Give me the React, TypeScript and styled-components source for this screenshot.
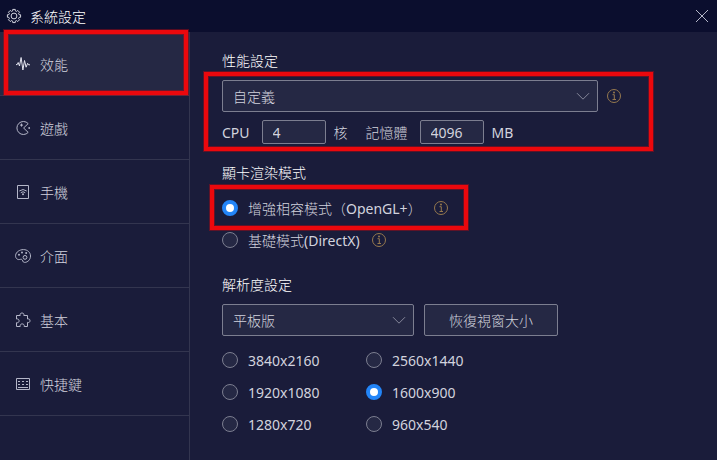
import React, { useState } from "react";
import styled, { createGlobalStyle, css } from "styled-components";

const color = {
  bar: "#0b0e2e",
  page: "#1a1c3a",
  raised: "#252844",
  line: "#33354f",
  border: "#7c7e90",
  text: "#d2d3de",
  heading: "#ffffff",
  muted: "#b4b6c8",
  accent: "#2385f8",
  info: "#96794f",
  mark: "#eb080d",
};

const GlobalStyle = createGlobalStyle`
  *, *::before, *::after { box-sizing: border-box; }
  body {
    margin: 0;
    background: ${color.page};
    color: ${color.text};
    font: 14px/20px "Noto Sans", "Noto Sans CJK TC Light", "Noto Sans CJK TC", sans-serif;
  }
  button, input, select { font: inherit; color: inherit; margin: 0; }
`;

const Window = styled.div`
  display: flex;
  flex-direction: column;
  min-height: 100vh;
`;

const TitleBar = styled.header`
  display: flex;
  align-items: center;
  gap: 8px;
  height: 32px;
  padding: 0 8px 0 6px;
  background: ${color.bar};
  color: ${color.heading};
`;

const Title = styled.h1`
  flex: 1;
  margin: 0;
  padding-top: 2px;
  font-size: 14px;
  font-weight: 400;
`;

const IconButton = styled.button`
  display: flex;
  padding: 0;
  border: 0;
  background: none;
  color: ${color.muted};
  cursor: pointer;
`;

const Body = styled.div`
  display: flex;
  flex: 1;
`;

const Sidebar = styled.nav`
  flex: 0 0 190px;
  border-right: 1px solid ${color.line};
`;

const marked = css`
  position: relative;
  &::after {
    content: "";
    position: absolute;
    border: 4px solid ${color.mark};
    box-shadow: 0 0 0 1px rgba(200, 8, 16, 0.4), inset 0 0 0 1px rgba(200, 8, 16, 0.4);
    pointer-events: none;
  }
`;

const NavItem = styled.button<{ $active: boolean; $marked?: boolean }>`
  display: flex;
  align-items: center;
  gap: 9px;
  width: 100%;
  height: 64px;
  padding: 0 15px;
  border: 0;
  border-bottom: 1px solid ${color.line};
  background: ${(p) => (p.$active ? color.raised : "transparent")};
  text-align: left;
  cursor: pointer;
  svg { color: ${(p) => (p.$active ? "#e4e5f0" : color.muted)}; }
  ${(p) => p.$marked && marked}
  &::after { inset: -2px 1px 0 4px; }
`;

const ItemText = styled.span`
  padding-top: 2px;
`;

const Content = styled.main`
  display: flex;
  flex: 1;
  flex-direction: column;
  gap: 20px;
  min-width: 0;
  padding: 20px 32px;
`;

const Section = styled.section`
  display: flex;
  flex-direction: column;
  align-items: flex-start;
  gap: 8px;
`;

const Heading = styled.h2`
  margin: 0;
  padding-bottom: 2px;
  color: ${color.heading};
  font-size: 14px;
  font-weight: 400;
  line-height: 18px;
`;

const PerformanceGroup = styled.div`
  display: flex;
  flex-direction: column;
  gap: 8px;
  ${marked}
  &::after { inset: -8px -32px -7px -18px; }
`;

const Row = styled.div<{ $gap: number }>`
  display: flex;
  align-items: center;
  gap: ${(p) => p.$gap}px;
`;

const SelectBox = styled.div<{ $width: number }>`
  position: relative;
  flex: 0 1 ${(p) => p.$width}px;
  width: ${(p) => p.$width}px;
  svg {
    position: absolute;
    right: 8px;
    top: 9px;
    color: #85879a;
    pointer-events: none;
  }
`;

const Select = styled.select`
  display: block;
  width: 100%;
  height: 32px;
  padding: 2px 32px 0 10px;
  border: 1px solid ${color.border};
  border-radius: 2px;
  background: ${color.raised};
  appearance: none;
`;

const FieldLabel = styled.label`
  display: flex;
  align-items: center;
  gap: 12px;
`;

const NumberInput = styled.input`
  width: 64px;
  height: 24px;
  padding: 0 10px;
  border: 1px solid ${color.border};
  border-radius: 2px;
  background: ${color.raised};
`;

const OutlineButton = styled.button`
  height: 32px;
  padding: 2px 24px 0;
  border: 1px solid ${color.border};
  border-radius: 2px;
  background: ${color.raised};
  cursor: pointer;
`;

const RadioList = styled.div`
  display: flex;
  flex-direction: column;
  align-items: flex-start;
`;

const RadioGrid = styled.div`
  display: grid;
  grid-template-columns: 144px auto;
`;

const RadioRow = styled.div<{ $marked?: boolean }>`
  display: flex;
  align-items: center;
  gap: 12px;
  height: 32px;
  ${(p) => p.$marked && marked}
  &::after { inset: -7px -20px -6px -12px; }
`;

const RadioLabel = styled.label`
  display: flex;
  align-items: center;
  gap: 10px;
`;

const RadioInput = styled.input`
  width: 16px;
  height: 16px;
  border: 1px solid ${color.border};
  border-radius: 50%;
  background: ${color.raised};
  appearance: none;
  &:checked {
    border: 4px solid ${color.accent};
    background: #ffffff;
  }
`;

const Svg = ({ size = 16, children }: { size?: number; children: React.ReactNode }) => (
  <svg
    width={size}
    height={size}
    viewBox={`0 0 ${size} ${size}`}
    fill="none"
    stroke="currentColor"
    strokeWidth="1"
    strokeLinejoin="round"
    aria-hidden="true"
  >
    {children}
  </svg>
);

const gearPath = (() => {
  const points: string[] = [];
  for (let i = 0; i < 8; i++) {
    const base = (i * Math.PI) / 4;
    [[-0.25, 5.3], [-0.19, 6.7], [0.19, 6.7], [0.25, 5.3]].forEach(([a, r]) => {
      points.push(`${(8 + r * Math.cos(base + a)).toFixed(2)} ${(8 + r * Math.sin(base + a)).toFixed(2)}`);
    });
  }
  return `M${points.join("L")}Z`;
})();

const GearIcon = () => (
  <Svg>
    <g stroke="#d2d3de">
      <path d={gearPath} />
      <circle cx="8" cy="8" r="2.9" />
    </g>
  </Svg>
);

const CloseIcon = () => (
  <Svg size={14}>
    <path d="M1 1L13 13M13 1L1 13" />
  </Svg>
);

const ChevronIcon = () => (
  <Svg size={14}>
    <path d="M1 4.2L7 10.2L13 4.2" />
  </Svg>
);

const PulseIcon = () => (
  <Svg>
    <path d="M1 8.6H2.2L3.2 6.5L4.5 10L6.1 1.5L7.9 14L9.5 4.5L11.1 11.2L12.6 7.3L13.6 8.8H15" />
  </Svg>
);

const GameIcon = () => (
  <Svg>
    <path d="M13.2 3.6A6.5 6.5 0 1 0 13.2 12.4L8.6 8Z" />
    <path d="M6.5 3.6V6.6M5 5.1H8" />
    <circle cx="14.2" cy="8" r="0.9" fill="currentColor" stroke="none" />
  </Svg>
);

const PhoneIcon = () => (
  <Svg>
    <path d="M2.5 1.5H13.5V14.5H2.5Z" />
    <path d="M4.3 7Q8 4 11.7 7M5.8 8.7Q8 6.8 10.2 8.7" />
    <circle cx="8" cy="10.2" r="1" fill="currentColor" stroke="none" />
  </Svg>
);

const PaletteIcon = () => (
  <Svg>
    <path d="M8.4 1.6C12.5 1.6 15.5 4.4 15.5 8C15.5 11.6 12.8 14.4 9.6 14.4C7.2 14.4 8.2 12 6.7 11.4C5.2 10.9 4.2 12.2 2.4 11.2C.9 10.3.4 8.8.6 7.3C1 4.1 4.5 1.6 8.4 1.6Z" />
    <circle cx="10" cy="9.4" r="1.9" />
    <g fill="currentColor" stroke="none">
      <circle cx="4" cy="6.8" r="1" />
      <circle cx="7" cy="4.5" r="1" />
      <circle cx="11.2" cy="5" r="1" />
    </g>
  </Svg>
);

const PuzzleIcon = () => (
  <Svg>
    <path d="M1.5 3.5H5.2C4.7 1.9 5.7 1 7 1C8.3 1 9.3 1.9 8.8 3.5H12.5V7C14.1 6.6 15 7.4 15 8.7C15 10 14.1 10.9 12.5 10.4V14.5H9.2C9.6 12.8 8.5 11.9 7.2 11.9C5.9 11.9 4.8 12.8 5.2 14.5H1.5V10.7C3.2 11 4.1 10 4.1 8.8C4.1 7.6 3.2 6.7 1.5 7Z" />
  </Svg>
);

const KeyboardIcon = () => (
  <Svg>
    <path d="M1.5 2.5H14.5V13.5H1.5Z" />
    <path d="M3 5.5H13M3 8.5H13" strokeDasharray="2 2" />
    <path d="M3 11.5H13" />
  </Svg>
);

const InfoIcon = () => (
  <Svg size={14}>
    <circle cx="7" cy="7" r="6.5" />
    <path d="M5.5 5.7H7.3V10.5M5.5 10.5H9" />
    <circle cx="7" cy="3.6" r="1" fill="currentColor" stroke="none" />
  </Svg>
);

const InfoButtonBase = styled(IconButton)`
  color: ${color.info};
`;

const InfoButton = ({ label }: { label: string }) => (
  <InfoButtonBase type="button" aria-label={label}>
    <InfoIcon />
  </InfoButtonBase>
);

const navItems = [
  { name: "效能", Icon: PulseIcon },
  { name: "遊戲", Icon: GameIcon },
  { name: "手機", Icon: PhoneIcon },
  { name: "介面", Icon: PaletteIcon },
  { name: "基本", Icon: PuzzleIcon },
  { name: "快捷鍵", Icon: KeyboardIcon },
];

const renderModes = ["增強相容模式（OpenGL+）", "基礎模式(DirectX)"];

const resolutions = ["3840x2160", "2560x1440", "1920x1080", "1600x900", "1280x720", "960x540"];

export default function App() {
  const [tab, setTab] = useState(navItems[0].name);
  const [mode, setMode] = useState(renderModes[0]);
  const [resolution, setResolution] = useState("1600x900");

  return (
    <Window lang="zh-TW">
      <GlobalStyle />
      <TitleBar>
        <GearIcon />
        <Title>系統設定</Title>
        <IconButton type="button" aria-label="關閉">
          <CloseIcon />
        </IconButton>
      </TitleBar>
      <Body>
        <Sidebar>
          {navItems.map(({ name, Icon }, i) => (
            <NavItem key={name} type="button" $active={tab === name} $marked={i === 0} onClick={() => setTab(name)}>
              <Icon />
              <ItemText>{name}</ItemText>
            </NavItem>
          ))}
        </Sidebar>
        <Content>
          <Section>
            <Heading>性能設定</Heading>
            <PerformanceGroup>
              <Row $gap={9}>
                <SelectBox $width={376}>
                  <Select aria-label="性能設定">
                    <option>自定義</option>
                  </Select>
                  <ChevronIcon />
                </SelectBox>
                <InfoButton label="性能說明" />
              </Row>
              <Row $gap={18}>
                <Row $gap={8}>
                  <FieldLabel>
                    <ItemText>CPU</ItemText>
                    <NumberInput type="text" inputMode="numeric" defaultValue="4" />
                  </FieldLabel>
                  <ItemText>核</ItemText>
                </Row>
                <Row $gap={8}>
                  <FieldLabel>
                    <ItemText>記憶體</ItemText>
                    <NumberInput type="text" inputMode="numeric" defaultValue="4096" />
                  </FieldLabel>
                  <ItemText>MB</ItemText>
                </Row>
              </Row>
            </PerformanceGroup>
          </Section>
          <Section>
            <Heading>顯卡渲染模式</Heading>
            <RadioList role="radiogroup" aria-label="顯卡渲染模式">
              {renderModes.map((name, i) => (
                <RadioRow key={name} $marked={i === 0}>
                  <RadioLabel>
                    <RadioInput type="radio" name="mode" checked={mode === name} onChange={() => setMode(name)} />
                    <ItemText>{name}</ItemText>
                  </RadioLabel>
                  <InfoButton label={`${name} 說明`} />
                </RadioRow>
              ))}
            </RadioList>
          </Section>
          <Section>
            <Heading>解析度設定</Heading>
            <Row $gap={10}>
              <SelectBox $width={192}>
                <Select aria-label="解析度設定">
                  <option>平板版</option>
                </Select>
                <ChevronIcon />
              </SelectBox>
              <OutlineButton type="button">恢復視窗大小</OutlineButton>
            </Row>
            <RadioGrid role="radiogroup" aria-label="解析度">
              {resolutions.map((name) => (
                <RadioRow key={name}>
                  <RadioLabel>
                    <RadioInput
                      type="radio"
                      name="resolution"
                      checked={resolution === name}
                      onChange={() => setResolution(name)}
                    />
                    <ItemText>{name}</ItemText>
                  </RadioLabel>
                </RadioRow>
              ))}
            </RadioGrid>
          </Section>
        </Content>
      </Body>
    </Window>
  );
}
